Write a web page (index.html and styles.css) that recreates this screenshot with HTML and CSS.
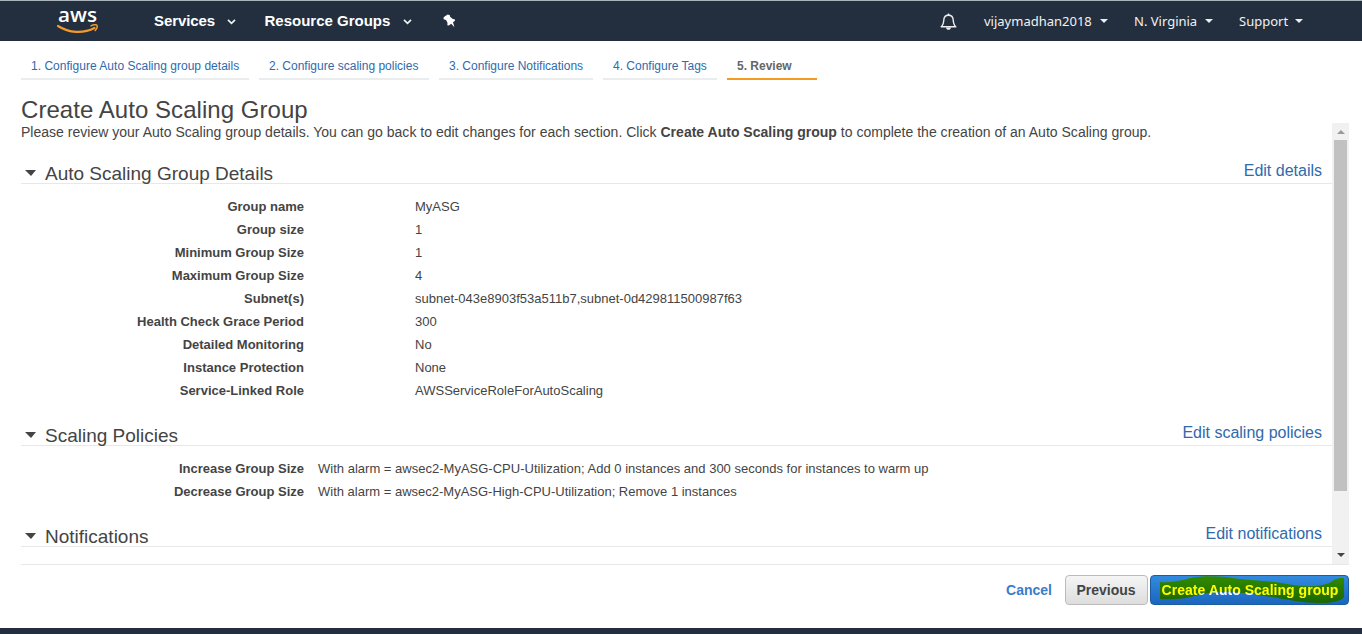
FILE: index.html
```html
<!DOCTYPE html>
<html lang="en">
<head>
<meta charset="utf-8">
<title>Create Auto Scaling Group</title>
<link rel="stylesheet" href="styles.css">
</head>
<body>
<header class="nav">
  <svg class="logo" width="42" height="40" viewBox="0 0 42 40">
    <text class="logo-text" x="1" y="20.500" textLength="39" lengthAdjust="spacingAndGlyphs">aws</text>
    <path d="M1 25C12 32 26 33 37.500 27" fill="none" stroke="#f39a2b" stroke-width="2.200" stroke-linecap="round"/>
    <path d="M34 24.900C36.500 23.600 39.400 23.600 40 24.300C40.500 25.300 39.600 27.800 38.200 29.500" fill="none" stroke="#f39a2b" stroke-width="1.500" stroke-linecap="round"/>
  </svg>
  <span class="menu services">Services</span>
  <svg class="chev" width="9" height="6" viewBox="0 0 9 6"><path d="M1 .8L4.5 4.4L8 .8"/></svg>
  <span class="menu resources">Resource Groups</span>
  <svg class="chev" width="9" height="6" viewBox="0 0 9 6"><path d="M1 .8L4.5 4.4L8 .8"/></svg>
  <svg class="pin" width="13" height="14" viewBox="0 0 13 14"><path d="M4.700.4L6.900 1.300L7.100 2.700L9.800 5L11.700 5.200L12 6.800L10 8.300L11.400 13.300L8.200 9.700L5.800 11.600L4.300 11.200L4.500 8.700L3 5.900L.7 5.200L.5 3.500L2.300 2Z" fill="#fff"/></svg>
  <div class="nav-right">
    <svg class="bell" width="17" height="18" viewBox="0 0 17 18"><path d="M1.200 13.700C3.400 12 3.600 10.500 3.800 7C4 4 5.700 2.200 8.500 2.200S13 4 13.200 7C13.400 10.500 13.600 12 15.800 13.700Z" fill="none" stroke="#eee" stroke-width="1.400" stroke-linejoin="round"/><path d="M7.500 1.500C7.500.2 9.500.2 9.500 1.500V2.500H7.500ZM6 14.500H11C10.700 17.600 6.300 17.600 6 14.500Z" fill="#eee"/></svg>
    <span class="acct user">vijaymadhan2018</span><i class="caret"></i>
    <span class="acct region">N. Virginia</span><i class="caret"></i>
    <span class="acct support">Support</span><i class="caret"></i>
  </div>
</header>
<nav class="tabs">
  <a class="tab t1">1. Configure Auto Scaling group details</a>
  <a class="tab t2">2. Configure scaling policies</a>
  <a class="tab t3">3. Configure Notifications</a>
  <a class="tab t4">4. Configure Tags</a>
  <a class="tab t5 active">5. Review</a>
</nav>
<h1 class="title">Create Auto Scaling Group</h1>
<main class="pane">
  <div class="content">
    <p class="intro">Please review your Auto Scaling group details. You can go back to edit changes for each section. Click <b>Create Auto Scaling group</b> to complete the creation of an Auto Scaling group.</p>
    <section class="details">
      <div class="head"><i class="arrow"></i><h2>Auto Scaling Group Details</h2><a>Edit details</a></div>
      <dl class="rows wide">
        <dt>Group name</dt><dd>MyASG</dd>
        <dt>Group size</dt><dd>1</dd>
        <dt>Minimum Group Size</dt><dd>1</dd>
        <dt>Maximum Group Size</dt><dd>4</dd>
        <dt>Subnet(s)</dt><dd>subnet-043e8903f53a511b7,subnet-0d429811500987f63</dd>
        <dt>Health Check Grace Period</dt><dd>300</dd>
        <dt>Detailed Monitoring</dt><dd>No</dd>
        <dt>Instance Protection</dt><dd>None</dd>
        <dt>Service-Linked Role</dt><dd>AWSServiceRoleForAutoScaling</dd>
      </dl>
    </section>
    <section class="policies">
      <div class="head"><i class="arrow"></i><h2>Scaling Policies</h2><a>Edit scaling policies</a></div>
      <dl class="rows">
        <dt>Increase Group Size</dt><dd class="alarm">With alarm = awsec2-MyASG-CPU-Utilization; Add 0 instances and 300 seconds for instances to warm up</dd>
        <dt>Decrease Group Size</dt><dd>With alarm = awsec2-MyASG-High-CPU-Utilization; Remove 1 instances</dd>
      </dl>
    </section>
    <section>
      <div class="head"><i class="arrow"></i><h2>Notifications</h2><a>Edit notifications</a></div>
    </section>
  </div>
  <div class="scrollbar"><i class="up"></i><div class="thumb"></div><i class="down"></i></div>
</main>
<div class="actions">
  <a class="cancel">Cancel</a>
  <button class="btn">Previous</button>
  <button class="btn primary"><span>Create Auto Scaling group</span>
    <svg class="marker" width="199" height="30" viewBox="0 0 199 30"><path d="M10 7C23 8 32 5 43 2.500C57 .5 73 1 86 3.500C104 5.500 123 6 140 9.500C155 12 172 12 181 7C186 3 190 3 194 3V22C191 26 182 28 170 28C151 28 136 24 115 21C92 17 66 15 48 20C35 24 24 25 10 24Z" fill="#ff0"/></svg>
  </button>
</div>
<footer class="footer"></footer>
</body>
</html>
```
FILE: styles.css
```css
* { box-sizing: border-box; }
body { margin: 0; height: 634px; overflow: hidden; display: flex; flex-direction: column; background: #fff; color: #444; font: 14px/23px "Liberation Sans", Arial, sans-serif; }
h1, h2, p, dl, dd { margin: 0; font-weight: normal; }
.nav { flex: none; height: 41px; border-top: 1px solid #a9b3bc; background: #232f3e; display: flex; align-items: center; padding: 0 59px 0 57px; }
.logo { overflow: visible; }
.logo-text { font: 600 20.5px "Open Sans", sans-serif; fill: #fff; }
.menu { color: #fff; font-weight: bold; font-size: 15px; line-height: 20px; white-space: nowrap; }
.services { margin-left: 55px; width: 73px; letter-spacing: -.1px; }
.resources { margin-left: 28.500px; width: 138.500px; }
.chev { margin-top: 2px; fill: none; stroke: #eee; stroke-width: 1.7; }
.pin { margin-left: 31px; }
.nav-right { margin-left: auto; display: flex; align-items: center; }
.bell { margin-right: 27px; margin-top: 1px; }
.acct { color: #f2f2f2; font: 13px/20px "Noto Sans", sans-serif; white-space: nowrap; }
.user { width: 116px; }
.region { width: 71px; margin-left: 26px; }
.support { width: 56px; margin-left: 26px; }
.caret { border: solid transparent; border-width: 4px 4px 0; border-top-color: #eee; }
.tabs { flex: none; display: flex; gap: 10px; padding: 11px 21px 0; height: 39px; }
.tab { height: 28px; padding: 0 10px; border-bottom: 2px solid #eaeded; color: #2f6aad; font-size: 12px; line-height: 29px; white-space: nowrap; }
.t1 { width: 228px; letter-spacing: .02px; }
.t2 { width: 170px; }
.t3 { width: 154px; }
.t4 { width: 114px; }
.t5 { width: 90px; }
.active { color: #666; font-weight: bold; border-color: #f39a1f; }
.title { margin: 16px 0 0 21px; height: 27px; font-size: 24px; line-height: 28px; letter-spacing: .05px; }
.pane { flex: none; height: 442px; margin: 0 13px 0 21px; border-bottom: 1px solid #e8e8e8; display: flex; }
.content { flex: 1; }
.intro { height: 37px; line-height: 18px; white-space: nowrap; letter-spacing: .013px; }
.details { height: 262px; }
.policies { height: 101px; }
.head { display: flex; height: 24px; border-bottom: 1px solid #e8e8e8; padding: 0 10px 0 4px; }
.arrow { margin: 10px 9px 0 0; height: 6px; border: solid transparent; border-width: 6px 5.5px 0 6px; border-top-color: #444; }
.head h2 { font-size: 19px; line-height: 27px; white-space: nowrap; }
.head a { margin-left: auto; color: #2f6aad; font-size: 16px; line-height: 21px; }
.rows { display: grid; grid-template-columns: 283px 1fr; column-gap: 14px; padding-top: 11px; font-size: 13px; grid-auto-rows: 23px; }
.wide { column-gap: 111px; }
.rows dt { text-align: right; font-weight: bold; }
.rows dd { white-space: nowrap; }
.alarm { letter-spacing: .01px; }
.scrollbar { width: 17px; background: #f1f1f1; display: flex; flex-direction: column; align-items: center; }
.thumb { width: 13px; height: 351px; background: #c1c1c1; }
.up { margin: 7px 0 6px; border: solid transparent; border-width: 0 4px 4px; border-bottom-color: #999; }
.down { margin: auto 0 7px; border: solid transparent; border-width: 4px 4px 0; border-top-color: #444; }
.actions { display: flex; justify-content: flex-end; align-items: center; padding: 10px 13px 0 0; }
.cancel { color: #3b7ccb; font-weight: bold; margin-right: 13px; }
.btn { width: 83px; height: 30px; padding: 0 1px 0 0; border: 1px solid #bbb; border-radius: 4px; background: linear-gradient(#f5f5f5, #ddd); color: #444; font: bold 14px "Liberation Sans", Arial, sans-serif; white-space: nowrap; }
.primary { position: relative; width: 199px; margin-left: 2px; padding: 0 0 0 1px; border-color: #1c5d9f; background: linear-gradient(#328be0, #1b65bd); color: #fff; isolation: isolate; }
.primary span { letter-spacing: .03px; }
.marker { position: absolute; left: -1px; top: -1px; mix-blend-mode: multiply; }
.footer { height: 6px; margin-top: auto; background: #232f3e; flex: none; }
```
